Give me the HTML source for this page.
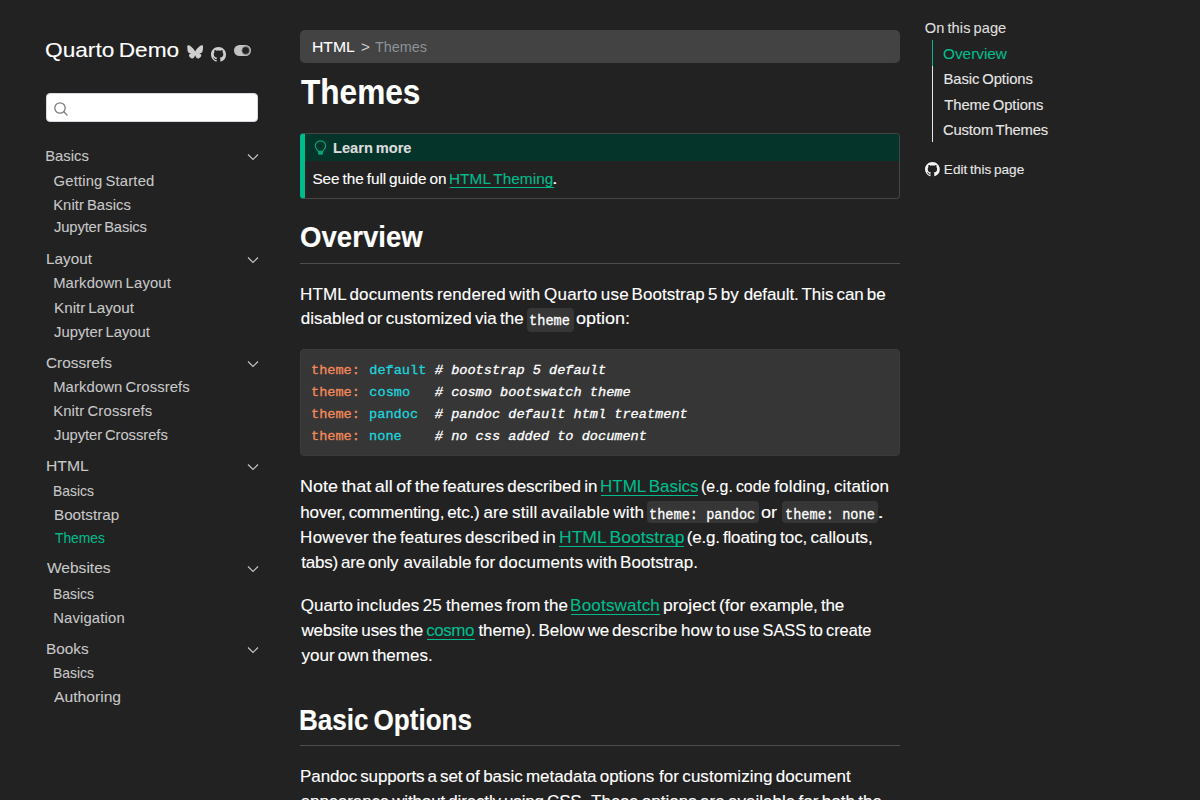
<!DOCTYPE html>
<html><head><meta charset="utf-8"><title>Themes</title>
<style>
html,body{margin:0;padding:0;background:#222222;width:1200px;height:800px;overflow:hidden;}
.t{position:absolute;white-space:nowrap;line-height:1;-webkit-text-stroke:0.12px currentColor;}
.bx{position:absolute;box-sizing:border-box;}
svg{position:absolute;overflow:visible}
</style></head><body>
<div class="t" style="left:45.177px;top:38.60px;font-family:'Liberation Sans',sans-serif;font-weight:normal;font-style:normal;font-size:21px;color:#ffffff;transform:scaleX(1.0799);transform-origin:0 0;word-spacing:-1.785px;">Quarto Demo</div>
<svg style="left:186.83px;top:44.82px" width="16.34" height="13.74" viewBox="0 0 600 530" preserveAspectRatio="none"><path fill="#cfcfcf" d="m135.72 44.03c66.496 49.921 138.020 151.140 164.280 205.460 26.262-54.316 97.782-155.540 164.280-205.460 47.980-36.021 125.720-63.892 125.720 24.795 0 17.712-10.155 148.790-16.111 170.070-20.703 73.984-96.144 92.854-163.250 81.433 117.300 19.964 147.140 86.092 82.697 152.220-122.390 125.590-175.910-31.511-189.630-71.766-2.514-7.3797-3.6904-10.832-3.7077-7.8964-0.0174-2.9357-1.1937 0.51669-3.7077 7.8964-13.714 40.255-67.233 197.360-189.630 71.766-64.444-66.128-34.605-132.260 82.697-152.220-67.108 11.421-142.550-7.4491-163.250-81.433-5.9562-21.282-16.111-152.360-16.111-170.070 0-88.687 77.742-60.816 125.720-24.795z"/></svg>
<svg style="left:211px;top:47px" width="15" height="15" viewBox="0 0 16 16"><path fill="#cfcfcf" d="M8 0C3.58 0 0 3.58 0 8c0 3.54 2.29 6.53 5.47 7.59.4.07.55-.17.55-.38 0-.19-.01-.82-.01-1.49-2.01.37-2.53-.49-2.69-.94-.09-.23-.48-.94-.82-1.13-.28-.15-.68-.52-.01-.53.63-.01 1.080.58 1.230.82.72 1.210 1.870.87 2.330.66.07-.52.28-.87.51-1.07-1.780-.2-3.640-.89-3.640-3.950 0-.87.31-1.590.82-2.150-.08-.2-.36-1.020.08-2.120 0 0 .67-.21 2.200.82.64-.18 1.320-.27 2-.27.68 0 1.360.09 2 .27 1.530-1.040 2.200-.82 2.200-.82.44 1.100.16 1.920.08 2.120.51.56.82 1.270.82 2.150 0 3.070-1.870 3.750-3.650 3.950.29.25.54.73.54 1.480 0 1.070-.01 1.930-.01 2.200 0 .21.15.46.55.38A8.013 8.013 0 0016 8c0-4.420-3.580-8-8-8z"/></svg>
<svg style="left:234px;top:45px" width="18" height="11" viewBox="0 0 18 11"><rect x="0" y="0" width="17" height="11" rx="5.5" fill="#c2c2c2"/><circle cx="11.7" cy="5.5" r="3.9" fill="#232323" stroke="#9a9a9a" stroke-width="0.7"/></svg>
<div class="bx" style="left:46px;top:93px;width:212px;height:29px;background:#fff;border-radius:4px;border:1px solid #d6dae0;"></div>
<svg style="left:53px;top:101px" width="16" height="16" viewBox="0 0 16 16"><circle cx="7" cy="7" r="5.2" fill="none" stroke="#7d7d7d" stroke-width="1.3"/><path d="M10.8 10.8 L14 14" stroke="#7d7d7d" stroke-width="1.3" stroke-linecap="round"/></svg>
<div class="t" style="left:45.182px;top:149.00px;font-family:'Liberation Sans',sans-serif;font-weight:normal;font-style:normal;font-size:14.8px;color:#c8c8c8;letter-spacing:0.010px;word-spacing:-1.258px;-webkit-text-stroke:0.08px currentColor;">Basics</div>
<svg style="left:247px;top:153px" width="12" height="8" viewBox="0 0 12 8"><path d="M1 1.5 L6 6.5 L11 1.5" fill="none" stroke="#c8c8c8" stroke-width="1.1"/></svg>
<div class="t" style="left:53.596px;top:173.70px;font-family:'Liberation Sans',sans-serif;font-weight:normal;font-style:normal;font-size:14.8px;color:#c8c8c8;letter-spacing:0.172px;word-spacing:-1.258px;-webkit-text-stroke:0.08px currentColor;">Getting Started</div>
<div class="t" style="left:53.148px;top:197.60px;font-family:'Liberation Sans',sans-serif;font-weight:normal;font-style:normal;font-size:14.8px;color:#c8c8c8;letter-spacing:0.081px;word-spacing:-1.258px;-webkit-text-stroke:0.08px currentColor;">Knitr Basics</div>
<div class="t" style="left:54.058px;top:220.30px;font-family:'Liberation Sans',sans-serif;font-weight:normal;font-style:normal;font-size:14.8px;color:#c8c8c8;letter-spacing:-0.161px;word-spacing:-1.258px;-webkit-text-stroke:0.08px currentColor;">Jupyter Basics</div>
<div class="t" style="left:45.796px;top:252.25px;font-family:'Liberation Sans',sans-serif;font-weight:normal;font-style:normal;font-size:14.8px;color:#c8c8c8;transform:scaleX(1.0351);transform-origin:0 0;word-spacing:-1.258px;-webkit-text-stroke:0.08px currentColor;">Layout</div>
<svg style="left:247px;top:256.25px" width="12" height="8" viewBox="0 0 12 8"><path d="M1 1.5 L6 6.5 L11 1.5" fill="none" stroke="#c8c8c8" stroke-width="1.1"/></svg>
<div class="t" style="left:53.148px;top:276.25px;font-family:'Liberation Sans',sans-serif;font-weight:normal;font-style:normal;font-size:14.8px;color:#c8c8c8;letter-spacing:0.152px;word-spacing:-1.258px;-webkit-text-stroke:0.08px currentColor;">Markdown Layout</div>
<div class="t" style="left:53.806px;top:300.50px;font-family:'Liberation Sans',sans-serif;font-weight:normal;font-style:normal;font-size:14.8px;color:#c8c8c8;transform:scaleX(1.0298);transform-origin:0 0;word-spacing:-1.258px;-webkit-text-stroke:0.08px currentColor;">Knitr Layout</div>
<div class="t" style="left:54.058px;top:324.75px;font-family:'Liberation Sans',sans-serif;font-weight:normal;font-style:normal;font-size:14.8px;color:#c8c8c8;letter-spacing:0.006px;word-spacing:-1.258px;-webkit-text-stroke:0.08px currentColor;">Jupyter Layout</div>
<div class="t" style="left:45.832px;top:355.50px;font-family:'Liberation Sans',sans-serif;font-weight:normal;font-style:normal;font-size:14.8px;color:#c8c8c8;transform:scaleX(1.0404);transform-origin:0 0;word-spacing:-1.258px;-webkit-text-stroke:0.08px currentColor;">Crossrefs</div>
<svg style="left:247px;top:359.5px" width="12" height="8" viewBox="0 0 12 8"><path d="M1 1.5 L6 6.5 L11 1.5" fill="none" stroke="#c8c8c8" stroke-width="1.1"/></svg>
<div class="t" style="left:53.148px;top:379.75px;font-family:'Liberation Sans',sans-serif;font-weight:normal;font-style:normal;font-size:14.8px;color:#c8c8c8;letter-spacing:0.129px;word-spacing:-1.258px;-webkit-text-stroke:0.08px currentColor;">Markdown Crossrefs</div>
<div class="t" style="left:53.148px;top:403.75px;font-family:'Liberation Sans',sans-serif;font-weight:normal;font-style:normal;font-size:14.8px;color:#c8c8c8;letter-spacing:0.180px;word-spacing:-1.258px;-webkit-text-stroke:0.08px currentColor;">Knitr Crossrefs</div>
<div class="t" style="left:54.058px;top:427.50px;font-family:'Liberation Sans',sans-serif;font-weight:normal;font-style:normal;font-size:14.8px;color:#c8c8c8;letter-spacing:-0.059px;word-spacing:-1.258px;-webkit-text-stroke:0.08px currentColor;">Jupyter Crossrefs</div>
<div class="t" style="left:45.727px;top:458.75px;font-family:'Liberation Sans',sans-serif;font-weight:normal;font-style:normal;font-size:14.8px;color:#c8c8c8;transform:scaleX(1.0591);transform-origin:0 0;word-spacing:-1.258px;-webkit-text-stroke:0.08px currentColor;">HTML</div>
<svg style="left:247px;top:462.75px" width="12" height="8" viewBox="0 0 12 8"><path d="M1 1.5 L6 6.5 L11 1.5" fill="none" stroke="#c8c8c8" stroke-width="1.1"/></svg>
<div class="t" style="left:53.037px;top:483.50px;font-family:'Liberation Sans',sans-serif;font-weight:normal;font-style:normal;font-size:14.8px;color:#c8c8c8;transform:scaleX(0.9369);transform-origin:0 0;word-spacing:-1.258px;-webkit-text-stroke:0.08px currentColor;">Basics</div>
<div class="t" style="left:53.806px;top:507.50px;font-family:'Liberation Sans',sans-serif;font-weight:normal;font-style:normal;font-size:14.8px;color:#c8c8c8;transform:scaleX(1.0289);transform-origin:0 0;word-spacing:-1.258px;-webkit-text-stroke:0.08px currentColor;">Bootstrap</div>
<div class="t" style="left:54.725px;top:530.50px;font-family:'Liberation Sans',sans-serif;font-weight:normal;font-style:normal;font-size:14.8px;color:#00bc8c;transform:scaleX(0.9335);transform-origin:0 0;word-spacing:-1.258px;-webkit-text-stroke:0.08px currentColor;">Themes</div>
<div class="t" style="left:47.037px;top:561.25px;font-family:'Liberation Sans',sans-serif;font-weight:normal;font-style:normal;font-size:14.8px;color:#c8c8c8;transform:scaleX(1.0485);transform-origin:0 0;word-spacing:-1.258px;-webkit-text-stroke:0.08px currentColor;">Websites</div>
<svg style="left:247px;top:565.25px" width="12" height="8" viewBox="0 0 12 8"><path d="M1 1.5 L6 6.5 L11 1.5" fill="none" stroke="#c8c8c8" stroke-width="1.1"/></svg>
<div class="t" style="left:53.037px;top:586.50px;font-family:'Liberation Sans',sans-serif;font-weight:normal;font-style:normal;font-size:14.8px;color:#c8c8c8;transform:scaleX(0.9369);transform-origin:0 0;word-spacing:-1.258px;-webkit-text-stroke:0.08px currentColor;">Basics</div>
<div class="t" style="left:53.148px;top:611.00px;font-family:'Liberation Sans',sans-serif;font-weight:normal;font-style:normal;font-size:14.8px;color:#c8c8c8;letter-spacing:0.175px;word-spacing:-1.258px;-webkit-text-stroke:0.08px currentColor;">Navigation</div>
<div class="t" style="left:45.772px;top:641.75px;font-family:'Liberation Sans',sans-serif;font-weight:normal;font-style:normal;font-size:14.8px;color:#c8c8c8;transform:scaleX(1.0357);transform-origin:0 0;word-spacing:-1.258px;-webkit-text-stroke:0.08px currentColor;">Books</div>
<svg style="left:247px;top:645.75px" width="12" height="8" viewBox="0 0 12 8"><path d="M1 1.5 L6 6.5 L11 1.5" fill="none" stroke="#c8c8c8" stroke-width="1.1"/></svg>
<div class="t" style="left:53.037px;top:666.25px;font-family:'Liberation Sans',sans-serif;font-weight:normal;font-style:normal;font-size:14.8px;color:#c8c8c8;transform:scaleX(0.9369);transform-origin:0 0;word-spacing:-1.258px;-webkit-text-stroke:0.08px currentColor;">Basics</div>
<div class="t" style="left:53.563px;top:690.20px;font-family:'Liberation Sans',sans-serif;font-weight:normal;font-style:normal;font-size:14.8px;color:#c8c8c8;transform:scaleX(1.0585);transform-origin:0 0;word-spacing:-1.258px;-webkit-text-stroke:0.08px currentColor;">Authoring</div>
<div class="bx" style="left:300px;top:30px;width:600px;height:33px;background:#434343;border-radius:5px;"></div>
<div class="t" style="left:312.279px;top:39.00px;font-family:'Liberation Sans',sans-serif;font-weight:normal;font-style:normal;font-size:15.3px;color:#ffffff;transform:scaleX(1.0286);transform-origin:0 0;word-spacing:-1.301px;-webkit-text-stroke:0.1px currentColor;">HTML</div>
<div class="t" style="left:360.983px;top:39.00px;font-family:'Liberation Sans',sans-serif;font-weight:normal;font-style:normal;font-size:15.3px;color:#d0d0d0;word-spacing:-1.301px;-webkit-text-stroke:0px;">&gt;</div>
<div class="t" style="left:374.641px;top:39.00px;font-family:'Liberation Sans',sans-serif;font-weight:normal;font-style:normal;font-size:15.3px;color:#8c9299;transform:scaleX(0.9400);transform-origin:0 0;word-spacing:-1.301px;-webkit-text-stroke:0px;">Themes</div>
<div class="t" style="left:300.782px;top:74.70px;font-family:'Liberation Sans',sans-serif;font-weight:bold;font-style:normal;font-size:35.4px;color:#ffffff;transform:scaleX(0.8923);transform-origin:0 0;word-spacing:-3.009px;">Themes</div>
<div class="bx" style="left:300px;top:133px;width:600px;height:66px;border:1px solid #454545;border-left:5px solid #00bc8c;border-radius:4px;"></div>
<div class="bx" style="left:305px;top:134px;width:594px;height:27px;background:#05342a;border-top-right-radius:3px;"></div>
<svg style="left:314px;top:139.5px" width="13" height="16" viewBox="0 0 13 16"><path d="M4.3 11.4 C3.9 10.1 1.3 8.7 1.3 6.1 A5.2 5.2 0 0 1 11.7 6.1 C11.7 8.7 9.1 10.1 8.7 11.4 Z" fill="none" stroke="#06a67d" stroke-width="1.1"/><path d="M4.1 11.5 L8.9 11.5 L8.9 13.8 Q8.9 14.8 7.8 14.8 L5.2 14.8 Q4.1 14.8 4.1 13.8 Z" fill="#06a67d"/></svg>
<div class="t" style="left:332.990px;top:140.00px;font-family:'Liberation Sans',sans-serif;font-weight:bold;font-style:normal;font-size:15.3px;color:#dcdcdc;transform:scaleX(0.9568);transform-origin:0 0;word-spacing:-1.301px;">Learn more</div>
<div class="t" style="left:312.413px;top:170.70px;font-family:'Liberation Sans',sans-serif;font-weight:normal;font-style:normal;font-size:15.3px;color:#ffffff;letter-spacing:-0.014px;word-spacing:-1.301px;">See the full guide on</div>
<div class="t" style="left:448.979px;top:170.70px;font-family:'Liberation Sans',sans-serif;font-weight:normal;font-style:normal;font-size:15.3px;color:#00bc8c;letter-spacing:0.097px;word-spacing:-1.301px;">HTML Theming</div>
<div class="bx" style="left:449.5px;top:186.8px;width:104.0px;height:1.0px;background:#00bc8c;"></div>
<div class="t" style="left:551.818px;top:170.70px;font-family:'Liberation Sans',sans-serif;font-weight:normal;font-style:normal;font-size:15.3px;color:#ffffff;transform:scaleX(1.3333);transform-origin:0 0;word-spacing:-1.301px;">.</div>
<div class="t" style="left:300.174px;top:223.00px;font-family:'Liberation Sans',sans-serif;font-weight:bold;font-style:normal;font-size:28.9px;color:#ffffff;transform:scaleX(0.9553);transform-origin:0 0;word-spacing:-2.457px;">Overview</div>
<div class="bx" style="left:300px;top:263px;width:600px;height:1px;background:#4d4d4d;"></div>
<div class="t" style="left:300.101px;top:285.50px;font-family:'Liberation Sans',sans-serif;font-weight:normal;font-style:normal;font-size:17px;color:#fff;letter-spacing:0.101px;word-spacing:-1.445px;">HTML documents rendered</div>
<div class="t" style="left:509.357px;top:285.50px;font-family:'Liberation Sans',sans-serif;font-weight:normal;font-style:normal;font-size:17px;color:#fff;letter-spacing:0.228px;word-spacing:-1.445px;">with Quarto use</div>
<div class="t" style="left:631.601px;top:285.50px;font-family:'Liberation Sans',sans-serif;font-weight:normal;font-style:normal;font-size:17px;color:#fff;letter-spacing:0.036px;word-spacing:-1.445px;">Bootstrap 5 by</div>
<div class="t" style="left:743.648px;top:285.50px;font-family:'Liberation Sans',sans-serif;font-weight:normal;font-style:normal;font-size:17px;color:#fff;letter-spacing:-0.092px;word-spacing:-1.445px;">default. This can be</div>
<div class="bx" style="left:527.25px;top:308px;width:46.5px;height:24px;background:#363636;border-radius:4px;"></div>
<div class="t" style="left:529.446px;top:314.00px;font-family:'Liberation Mono',monospace;font-weight:normal;font-style:normal;font-size:14.9px;color:#ffffff;transform:scaleX(0.9169);transform-origin:0 0;-webkit-text-stroke:0.3px currentColor;">theme</div>
<div class="t" style="left:300.781px;top:310.20px;font-family:'Liberation Sans',sans-serif;font-weight:normal;font-style:normal;font-size:17px;color:#fff;letter-spacing:0.001px;word-spacing:-1.445px;">disabled or customized via the</div>
<div class="t" style="left:576.405px;top:310.20px;font-family:'Liberation Sans',sans-serif;font-weight:normal;font-style:normal;font-size:17px;color:#fff;transform:scaleX(1.0592);transform-origin:0 0;word-spacing:-1.445px;">option:</div>
<div class="bx" style="left:300px;top:349px;width:600px;height:107px;background:#363636;border:1px solid #3c3c3c;border-radius:4px;"></div>
<div class="t" style="left:310.979px;top:363.50px;font-family:'Liberation Mono',monospace;font-weight:normal;font-style:normal;font-size:13.6px;color:#f3895a;-webkit-text-stroke:0.3px currentColor;">theme:</div>
<div class="t" style="left:369.221px;top:363.50px;font-family:'Liberation Mono',monospace;font-weight:normal;font-style:normal;font-size:13.6px;color:#20d3dd;-webkit-text-stroke:0.3px currentColor;">default</div>
<div class="t" style="left:434.838px;top:363.50px;font-family:'Liberation Mono',monospace;font-weight:normal;font-style:italic;font-size:13.6px;color:#ffffff;-webkit-text-stroke:0.3px currentColor;"># bootstrap 5 default</div>
<div class="t" style="left:310.979px;top:385.60px;font-family:'Liberation Mono',monospace;font-weight:normal;font-style:normal;font-size:13.6px;color:#f3895a;-webkit-text-stroke:0.3px currentColor;">theme:</div>
<div class="t" style="left:369.318px;top:385.60px;font-family:'Liberation Mono',monospace;font-weight:normal;font-style:normal;font-size:13.6px;color:#20d3dd;-webkit-text-stroke:0.3px currentColor;">cosmo</div>
<div class="t" style="left:434.838px;top:385.60px;font-family:'Liberation Mono',monospace;font-weight:normal;font-style:italic;font-size:13.6px;color:#ffffff;-webkit-text-stroke:0.3px currentColor;"># cosmo bootswatch theme</div>
<div class="t" style="left:310.979px;top:407.50px;font-family:'Liberation Mono',monospace;font-weight:normal;font-style:normal;font-size:13.6px;color:#f3895a;-webkit-text-stroke:0.3px currentColor;">theme:</div>
<div class="t" style="left:369.101px;top:407.50px;font-family:'Liberation Mono',monospace;font-weight:normal;font-style:normal;font-size:13.6px;color:#20d3dd;-webkit-text-stroke:0.3px currentColor;">pandoc</div>
<div class="t" style="left:434.838px;top:407.50px;font-family:'Liberation Mono',monospace;font-weight:normal;font-style:italic;font-size:13.6px;color:#ffffff;-webkit-text-stroke:0.3px currentColor;"># pandoc default html treatment</div>
<div class="t" style="left:310.979px;top:430.00px;font-family:'Liberation Mono',monospace;font-weight:normal;font-style:normal;font-size:13.6px;color:#f3895a;-webkit-text-stroke:0.3px currentColor;">theme:</div>
<div class="t" style="left:369.101px;top:430.00px;font-family:'Liberation Mono',monospace;font-weight:normal;font-style:normal;font-size:13.6px;color:#20d3dd;-webkit-text-stroke:0.3px currentColor;">none</div>
<div class="t" style="left:434.838px;top:430.00px;font-family:'Liberation Mono',monospace;font-weight:normal;font-style:italic;font-size:13.6px;color:#ffffff;-webkit-text-stroke:0.3px currentColor;"># no css added to document</div>
<div class="t" style="left:299.830px;top:477.70px;font-family:'Liberation Sans',sans-serif;font-weight:normal;font-style:normal;font-size:17px;color:#fff;transform:scaleX(1.0561);transform-origin:0 0;word-spacing:-1.445px;">Note that all of the</div>
<div class="t" style="left:442.476px;top:477.70px;font-family:'Liberation Sans',sans-serif;font-weight:normal;font-style:normal;font-size:17px;color:#fff;word-spacing:-1.445px;">features described in</div>
<div class="t" style="left:600.101px;top:477.70px;font-family:'Liberation Sans',sans-serif;font-weight:normal;font-style:normal;font-size:17px;color:#00bc8c;letter-spacing:-0.053px;word-spacing:-1.445px;">HTML Basics</div>
<div class="t" style="left:700.940px;top:477.70px;font-family:'Liberation Sans',sans-serif;font-weight:normal;font-style:normal;font-size:17px;color:#fff;transform:scaleX(0.9359);transform-origin:0 0;word-spacing:-1.445px;">(e.g. code</div>
<div class="t" style="left:774.148px;top:477.70px;font-family:'Liberation Sans',sans-serif;font-weight:normal;font-style:normal;font-size:17px;color:#fff;letter-spacing:0.184px;word-spacing:-1.445px;">folding, citation</div>
<div class="bx" style="left:601px;top:494.8px;width:97.29999999999995px;height:1.0px;background:#00bc8c;"></div>
<div class="bx" style="left:647.25px;top:501.3px;width:111.5px;height:22.19999999999999px;background:#363636;border-radius:4px;"></div>
<div class="bx" style="left:782.25px;top:501.3px;width:95.5px;height:22.19999999999999px;background:#363636;border-radius:4px;"></div>
<div class="t" style="left:649.450px;top:507.50px;font-family:'Liberation Mono',monospace;font-weight:normal;font-style:normal;font-size:14.9px;color:#fff;transform:scaleX(0.9144);transform-origin:0 0;-webkit-text-stroke:0.3px currentColor;">theme: pandoc</div>
<div class="t" style="left:784.944px;top:507.50px;font-family:'Liberation Mono',monospace;font-weight:normal;font-style:normal;font-size:14.9px;color:#fff;transform:scaleX(0.9143);transform-origin:0 0;-webkit-text-stroke:0.3px currentColor;">theme: none</div>
<div class="t" style="left:300.340px;top:503.50px;font-family:'Liberation Sans',sans-serif;font-weight:normal;font-style:normal;font-size:17px;color:#fff;letter-spacing:-0.168px;word-spacing:-1.445px;">hover, commenting, etc.)</div>
<div class="t" style="left:483.380px;top:503.50px;font-family:'Liberation Sans',sans-serif;font-weight:normal;font-style:normal;font-size:17px;color:#fff;letter-spacing:0.191px;word-spacing:-1.445px;">are still available with</div>
<div class="t" style="left:761.366px;top:503.50px;font-family:'Liberation Sans',sans-serif;font-weight:normal;font-style:normal;font-size:17px;color:#fff;transform:scaleX(1.0666);transform-origin:0 0;word-spacing:-1.445px;">or</div>
<div class="t" style="left:876.551px;top:503.50px;font-family:'Liberation Sans',sans-serif;font-weight:normal;font-style:normal;font-size:17px;color:#fff;transform:scaleX(1.5385);transform-origin:0 0;word-spacing:-1.445px;">.</div>
<div class="t" style="left:300.101px;top:528.50px;font-family:'Liberation Sans',sans-serif;font-weight:normal;font-style:normal;font-size:17px;color:#fff;letter-spacing:0.268px;word-spacing:-1.445px;">However the</div>
<div class="t" style="left:400.044px;top:528.50px;font-family:'Liberation Sans',sans-serif;font-weight:normal;font-style:normal;font-size:17px;color:#fff;letter-spacing:0.039px;word-spacing:-1.445px;">features described in</div>
<div class="t" style="left:558.629px;top:528.50px;font-family:'Liberation Sans',sans-serif;font-weight:normal;font-style:normal;font-size:17px;color:#00bc8c;transform:scaleX(1.0310);transform-origin:0 0;word-spacing:-1.445px;">HTML Bootstrap</div>
<div class="t" style="left:686.667px;top:528.50px;font-family:'Liberation Sans',sans-serif;font-weight:normal;font-style:normal;font-size:17px;color:#fff;letter-spacing:-0.166px;word-spacing:-1.445px;">(e.g. floating</div>
<div class="t" style="left:780.003px;top:528.50px;font-family:'Liberation Sans',sans-serif;font-weight:normal;font-style:normal;font-size:17px;color:#fff;letter-spacing:-0.020px;word-spacing:-1.445px;">toc, callouts,</div>
<div class="bx" style="left:559.3px;top:545.6px;width:124.70000000000005px;height:1.0px;background:#00bc8c;"></div>
<div class="t" style="left:301.256px;top:554.30px;font-family:'Liberation Sans',sans-serif;font-weight:normal;font-style:normal;font-size:17px;color:#fff;letter-spacing:-0.217px;word-spacing:-1.445px;">tabs) are only</div>
<div class="t" style="left:403.380px;top:554.30px;font-family:'Liberation Sans',sans-serif;font-weight:normal;font-style:normal;font-size:17px;color:#fff;letter-spacing:0.133px;word-spacing:-1.445px;">available for documents with</div>
<div class="t" style="left:620.101px;top:554.30px;font-family:'Liberation Sans',sans-serif;font-weight:normal;font-style:normal;font-size:17px;color:#fff;letter-spacing:0.035px;word-spacing:-1.445px;">Bootstrap.</div>
<div class="t" style="left:300.715px;top:596.50px;font-family:'Liberation Sans',sans-serif;font-weight:normal;font-style:normal;font-size:17px;color:#fff;letter-spacing:0.073px;word-spacing:-1.445px;">Quarto includes 25</div>
<div class="t" style="left:445.979px;top:596.50px;font-family:'Liberation Sans',sans-serif;font-weight:normal;font-style:normal;font-size:17px;color:#fff;letter-spacing:0.151px;word-spacing:-1.445px;">themes from the</div>
<div class="t" style="left:570.101px;top:596.50px;font-family:'Liberation Sans',sans-serif;font-weight:normal;font-style:normal;font-size:17px;color:#00bc8c;letter-spacing:0.206px;word-spacing:-1.445px;">Bootswatch</div>
<div class="t" style="left:662.829px;top:596.50px;font-family:'Liberation Sans',sans-serif;font-weight:normal;font-style:normal;font-size:17px;color:#fff;transform:scaleX(1.0307);transform-origin:0 0;word-spacing:-1.445px;">project (for</div>
<div class="t" style="left:749.682px;top:596.50px;font-family:'Liberation Sans',sans-serif;font-weight:normal;font-style:normal;font-size:17px;color:#fff;letter-spacing:-0.116px;word-spacing:-1.445px;">example, the</div>
<div class="bx" style="left:571.2px;top:613.6px;width:88.79999999999995px;height:1.0px;background:#00bc8c;"></div>
<div class="t" style="left:301.474px;top:621.80px;font-family:'Liberation Sans',sans-serif;font-weight:normal;font-style:normal;font-size:17px;color:#fff;letter-spacing:-0.132px;word-spacing:-1.445px;">website uses the</div>
<div class="t" style="left:426.175px;top:621.80px;font-family:'Liberation Sans',sans-serif;font-weight:normal;font-style:normal;font-size:17px;color:#00bc8c;letter-spacing:-0.440px;word-spacing:-1.445px;">cosmo</div>
<div class="t" style="left:478.386px;top:621.80px;font-family:'Liberation Sans',sans-serif;font-weight:normal;font-style:normal;font-size:17px;color:#fff;letter-spacing:-0.086px;word-spacing:-1.445px;">theme). Below we</div>
<div class="t" style="left:611.976px;top:621.80px;font-family:'Liberation Sans',sans-serif;font-weight:normal;font-style:normal;font-size:17px;color:#fff;letter-spacing:0.160px;word-spacing:-1.445px;">describe how to</div>
<div class="t" style="left:732.986px;top:621.80px;font-family:'Liberation Sans',sans-serif;font-weight:normal;font-style:normal;font-size:17px;color:#fff;transform:scaleX(0.9611);transform-origin:0 0;word-spacing:-1.445px;">use SASS to create</div>
<div class="bx" style="left:426.7px;top:638.9px;width:48.30000000000001px;height:1.0px;background:#00bc8c;"></div>
<div class="t" style="left:301.506px;top:646.80px;font-family:'Liberation Sans',sans-serif;font-weight:normal;font-style:normal;font-size:17px;color:#fff;letter-spacing:-0.011px;word-spacing:-1.445px;">your own themes.</div>
<div class="t" style="left:299.036px;top:706.00px;font-family:'Liberation Sans',sans-serif;font-weight:bold;font-style:normal;font-size:28.9px;color:#ffffff;transform:scaleX(0.9022);transform-origin:0 0;word-spacing:-2.457px;">Basic Options</div>
<div class="bx" style="left:300px;top:745px;width:600px;height:1px;background:#4d4d4d;"></div>
<div class="t" style="left:300.101px;top:767.70px;font-family:'Liberation Sans',sans-serif;font-weight:normal;font-style:normal;font-size:17px;color:#fff;letter-spacing:-0.120px;word-spacing:-1.445px;">Pandoc supports a set of</div>
<div class="t" style="left:483.201px;top:767.70px;font-family:'Liberation Sans',sans-serif;font-weight:normal;font-style:normal;font-size:17px;color:#fff;letter-spacing:-0.038px;word-spacing:-1.445px;">basic metadata options</div>
<div class="t" style="left:659.084px;top:767.70px;font-family:'Liberation Sans',sans-serif;font-weight:normal;font-style:normal;font-size:17px;color:#fff;letter-spacing:0.037px;word-spacing:-1.445px;">for customizing document</div>
<div class="t" style="left:300.771px;top:793.30px;font-family:'Liberation Sans',sans-serif;font-weight:normal;font-style:normal;font-size:17px;color:#fff;letter-spacing:-0.147px;word-spacing:-1.445px;">appearance without directly using CSS.</div>
<div class="t" style="left:591.104px;top:793.30px;font-family:'Liberation Sans',sans-serif;font-weight:normal;font-style:normal;font-size:17px;color:#fff;letter-spacing:0.023px;word-spacing:-1.445px;">These options are available for both the</div>
<div class="t" style="left:924.823px;top:20.90px;font-family:'Liberation Sans',sans-serif;font-weight:normal;font-style:normal;font-size:14.6px;color:#dedede;letter-spacing:0.104px;word-spacing:-1.241px;">On this page</div>
<div class="bx" style="left:932px;top:40px;width:1px;height:26px;background:#00bc8c;"></div>
<div class="bx" style="left:932px;top:66px;width:1px;height:76px;background:#e6e6e6;"></div>
<div class="t" style="left:942.532px;top:46.75px;font-family:'Liberation Sans',sans-serif;font-weight:normal;font-style:normal;font-size:14.8px;color:#00bc8c;transform:scaleX(1.0366);transform-origin:0 0;word-spacing:-1.258px;-webkit-text-stroke:0.1px currentColor;">Overview</div>
<div class="t" style="left:943.540px;top:71.50px;font-family:'Liberation Sans',sans-serif;font-weight:normal;font-style:normal;font-size:14.8px;color:#e6e6e6;letter-spacing:-0.054px;word-spacing:-1.258px;">Basic Options</div>
<div class="t" style="left:944.326px;top:97.75px;font-family:'Liberation Sans',sans-serif;font-weight:normal;font-style:normal;font-size:14.8px;color:#e6e6e6;letter-spacing:-0.073px;word-spacing:-1.258px;">Theme Options</div>
<div class="t" style="left:942.946px;top:122.60px;font-family:'Liberation Sans',sans-serif;font-weight:normal;font-style:normal;font-size:14.8px;color:#e6e6e6;letter-spacing:-0.141px;word-spacing:-1.258px;">Custom Themes</div>
<svg style="left:925px;top:161.6px" width="14.8" height="14.6" viewBox="0 0 16 16" preserveAspectRatio="none"><path fill="#f4f4f4" d="M8 0C3.58 0 0 3.58 0 8c0 3.54 2.29 6.53 5.47 7.590.4.07.55-.17.55-.38 0-.19-.01-.82-.01-1.490-2.010.37-2.530-.49-2.690-.94-.09-.23-.48-.94-.82-1.130-.28-.15-.68-.52-.01-.53.63-.01 1.080.58 1.230.82.72 1.210 1.870.87 2.330.66.07-.52.28-.87.51-1.070-1.780-.2-3.640-.89-3.640-3.950 0-.87.31-1.590.82-2.150-.08-.2-.36-1.020.08-2.120 0 0 .67-.21 2.200.82.64-.18 1.320-.27 2-.27.68 0 1.360.09 2 .27 1.530-1.040 2.200-.82 2.200-.82.44 1.100.16 1.920.08 2.120.51.56.82 1.270.82 2.150 0 3.070-1.870 3.750-3.650 3.950.29.25.54.73.54 1.480 0 1.070-.01 1.930-.01 2.200 0 .21.15.46.55.38A8.013 8.013 0 0016 8c0-4.420-3.580-8-8-8z"/></svg>
<div class="t" style="left:943.865px;top:162.50px;font-family:'Liberation Sans',sans-serif;font-weight:normal;font-style:normal;font-size:13.6px;color:#e6e6e6;letter-spacing:0.023px;word-spacing:-1.156px;">Edit this page</div>
</body></html>
